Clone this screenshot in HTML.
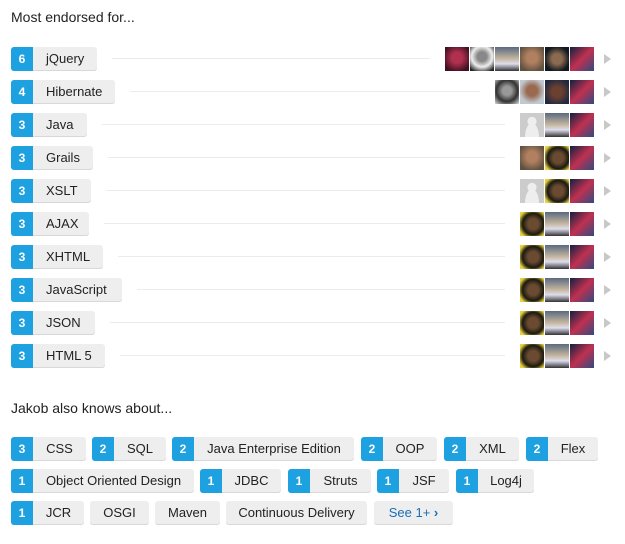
<!DOCTYPE html>
<html><head><style>
body{margin:0;width:625px;height:544px;background:#fff;font-family:"Liberation Sans",Arial,sans-serif;color:#222;position:relative;overflow:hidden}
.h{position:absolute;left:11px;font-size:14px}
.row{position:absolute;left:0;width:625px;height:24px}
.pill{position:absolute;left:11px;top:0;height:24px;background:#eee;border-radius:3px;box-shadow:inset 0 -1px 0 #d8d8d8;font-size:13px;line-height:24px;box-sizing:border-box}
.n{position:absolute;left:0;top:0;width:22px;height:24px;background:#1ea1e1;color:#fff;font-weight:bold;text-align:center;border-radius:3px 0 0 3px;font-size:12px}
.pill .t{position:absolute;left:35px;white-space:nowrap}
.line{position:absolute;top:11px;height:1px;background:#ececec}
.av{position:absolute;top:0;width:24px;height:24px}
.arr{position:absolute;left:604px;top:7px;width:0;height:0;border-left:7px solid #c8c8c8;border-top:5px solid transparent;border-bottom:5px solid transparent}
.a{background:radial-gradient(circle at 50% 45%,#b03050 30%,#401020 80%)}
.b{background:radial-gradient(circle at 50% 40%,#888 25%,#eee 55%,#222 90%)}
.c{background:linear-gradient(#5a6a80,#c8b8a0 50%,#dde 70%,#333)}
.d{background:radial-gradient(circle at 50% 45%,#b08060 30%,#605040 80%)}
.e{background:radial-gradient(circle at 50% 50%,#8a6a50 30%,#101820 75%)}
.f{background:linear-gradient(135deg,#102040,#c03050 50%,#304a80)}
.g{background:radial-gradient(circle at 50% 45%,#999 25%,#333 60%,#ddd)}
.hh{background:radial-gradient(circle at 50% 45%,#9a6a50 30%,#c0c8d0 70%)}
.i{background:radial-gradient(circle at 50% 50%,#6a4030 30%,#202840 80%)}
.j{background:radial-gradient(circle at 50% 35%,#eee 22%,transparent 24%),radial-gradient(ellipse at 50% 100%,#eee 40%,#ccc 42%);background-color:#ccc}
.k{background:radial-gradient(circle at 55% 50%,#6a4a30 30%,#1a1a10 60%,#e8d040 85%)}
.tag{position:absolute;height:24px;background:#eee;border-radius:3px;box-shadow:inset 0 -1px 0 #d8d8d8;font-size:13px;line-height:24px;text-align:center;box-sizing:border-box}
.tag.w{padding-left:22px}
.tag .n{font-size:12px}
</style></head><body>
<div class="h" style="top:9px">Most endorsed for...</div>

<div class="row" style="top:47px"><div class="pill" style="width:86px"><div class="n">6</div><span class="t">jQuery</span></div><div class="line" style="left:112px;width:318px"></div>
<div class="av a" style="left:445px"></div><div class="av b" style="left:470px"></div><div class="av c" style="left:495px"></div><div class="av d" style="left:520px"></div><div class="av e" style="left:545px"></div><div class="av f" style="left:570px"></div><div class="arr"></div></div>

<div class="row" style="top:80px"><div class="pill" style="width:104px"><div class="n">4</div><span class="t">Hibernate</span></div><div class="line" style="left:130px;width:350px"></div>
<div class="av g" style="left:495px"></div><div class="av hh" style="left:520px"></div><div class="av i" style="left:545px"></div><div class="av f" style="left:570px"></div><div class="arr"></div></div>

<div class="row" style="top:113px"><div class="pill" style="width:76px"><div class="n">3</div><span class="t">Java</span></div><div class="line" style="left:102px;width:403px"></div>
<div class="av j" style="left:520px"></div><div class="av c" style="left:545px"></div><div class="av f" style="left:570px"></div><div class="arr"></div></div>

<div class="row" style="top:146px"><div class="pill" style="width:82px"><div class="n">3</div><span class="t">Grails</span></div><div class="line" style="left:108px;width:397px"></div>
<div class="av d" style="left:520px"></div><div class="av k" style="left:545px"></div><div class="av f" style="left:570px"></div><div class="arr"></div></div>

<div class="row" style="top:179px"><div class="pill" style="width:80px"><div class="n">3</div><span class="t">XSLT</span></div><div class="line" style="left:106px;width:399px"></div>
<div class="av j" style="left:520px"></div><div class="av k" style="left:545px"></div><div class="av f" style="left:570px"></div><div class="arr"></div></div>

<div class="row" style="top:212px"><div class="pill" style="width:78px"><div class="n">3</div><span class="t">AJAX</span></div><div class="line" style="left:104px;width:401px"></div>
<div class="av k" style="left:520px"></div><div class="av c" style="left:545px"></div><div class="av f" style="left:570px"></div><div class="arr"></div></div>

<div class="row" style="top:245px"><div class="pill" style="width:92px"><div class="n">3</div><span class="t">XHTML</span></div><div class="line" style="left:118px;width:387px"></div>
<div class="av k" style="left:520px"></div><div class="av c" style="left:545px"></div><div class="av f" style="left:570px"></div><div class="arr"></div></div>

<div class="row" style="top:278px"><div class="pill" style="width:111px"><div class="n">3</div><span class="t">JavaScript</span></div><div class="line" style="left:137px;width:368px"></div>
<div class="av k" style="left:520px"></div><div class="av c" style="left:545px"></div><div class="av f" style="left:570px"></div><div class="arr"></div></div>

<div class="row" style="top:311px"><div class="pill" style="width:84px"><div class="n">3</div><span class="t">JSON</span></div><div class="line" style="left:110px;width:395px"></div>
<div class="av k" style="left:520px"></div><div class="av c" style="left:545px"></div><div class="av f" style="left:570px"></div><div class="arr"></div></div>

<div class="row" style="top:344px"><div class="pill" style="width:94px"><div class="n">3</div><span class="t">HTML 5</span></div><div class="line" style="left:120px;width:385px"></div>
<div class="av k" style="left:520px"></div><div class="av c" style="left:545px"></div><div class="av f" style="left:570px"></div><div class="arr"></div></div>

<div class="h" style="top:400px">Jakob also knows about...</div>

<div class="tag w" style="left:11px;top:437px;width:75px"><div class="n">3</div>CSS</div>
<div class="tag w" style="left:92px;top:437px;width:74px"><div class="n">2</div>SQL</div>
<div class="tag w" style="left:172px;top:437px;width:182px"><div class="n">2</div>Java Enterprise Edition</div>
<div class="tag w" style="left:361px;top:437px;width:76px"><div class="n">2</div>OOP</div>
<div class="tag w" style="left:444px;top:437px;width:75px"><div class="n">2</div>XML</div>
<div class="tag w" style="left:526px;top:437px;width:72px"><div class="n">2</div>Flex</div>

<div class="tag w" style="left:11px;top:469px;width:183px"><div class="n">1</div>Object Oriented Design</div>
<div class="tag w" style="left:200px;top:469px;width:81px"><div class="n">1</div>JDBC</div>
<div class="tag w" style="left:288px;top:469px;width:83px"><div class="n">1</div>Struts</div>
<div class="tag w" style="left:377px;top:469px;width:72px"><div class="n">1</div>JSF</div>
<div class="tag w" style="left:456px;top:469px;width:78px"><div class="n">1</div>Log4j</div>

<div class="tag w" style="left:11px;top:501px;width:73px"><div class="n">1</div>JCR</div>
<div class="tag" style="left:90px;top:501px;width:59px">OSGI</div>
<div class="tag" style="left:155px;top:501px;width:65px">Maven</div>
<div class="tag" style="left:226px;top:501px;width:141px">Continuous Delivery</div>
<div class="tag" style="left:374px;top:501px;width:79px;color:#1a6fb5">See 1+ <b>&#8250;</b></div>
</body></html>
